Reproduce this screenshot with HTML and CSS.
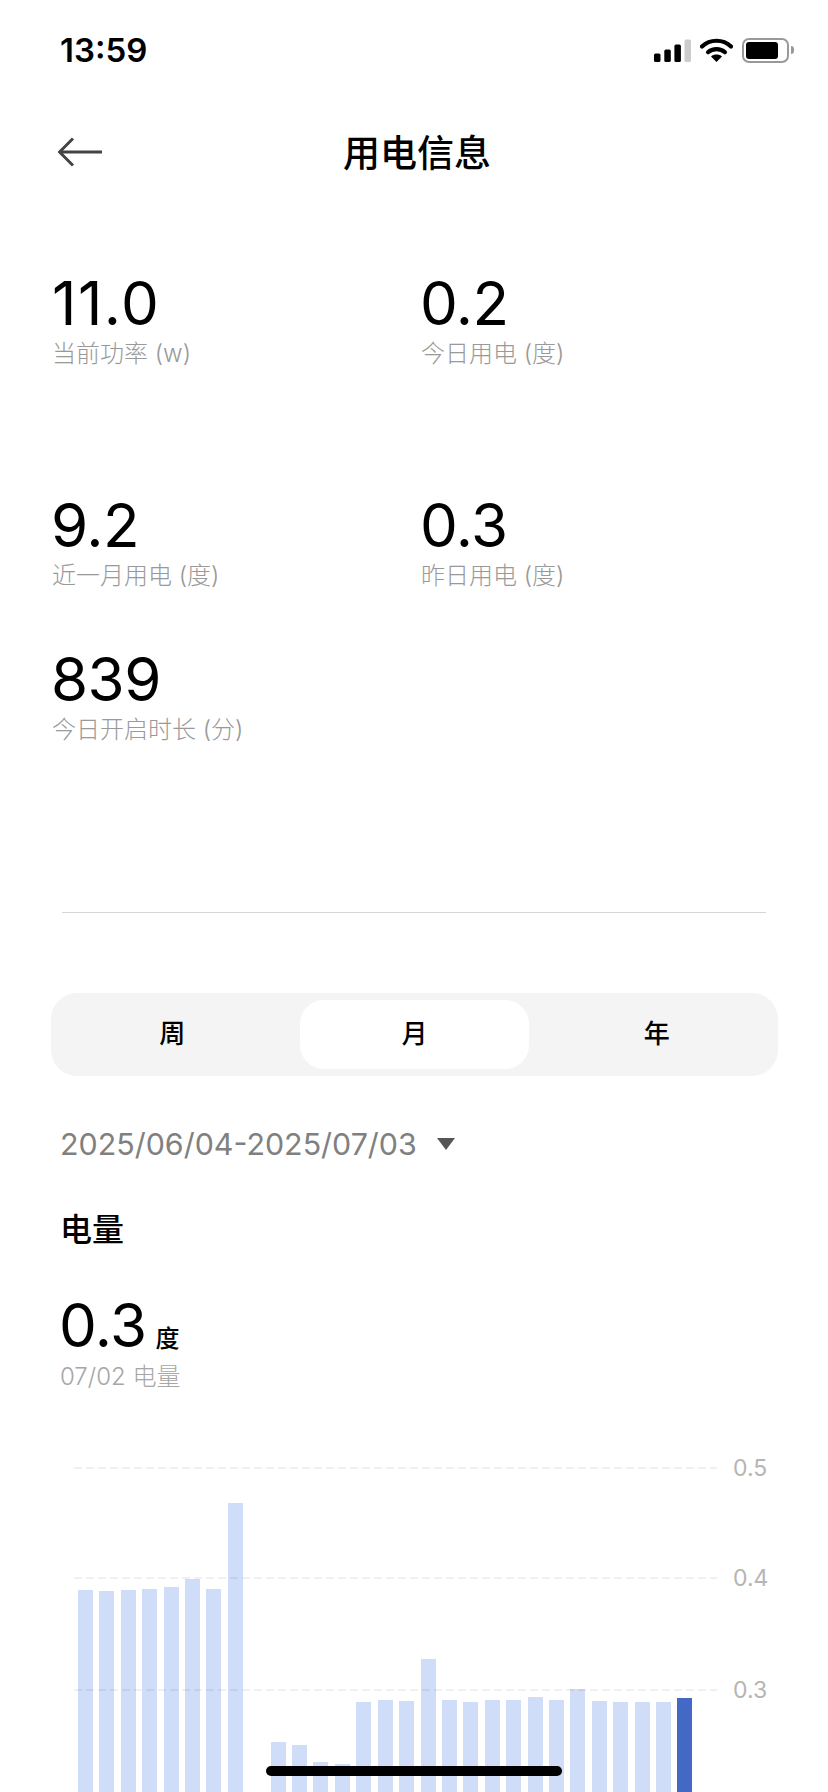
FILE: index.html
```html
<!DOCTYPE html>
<html lang="zh">
<head>
<meta charset="utf-8">
<title>用电信息</title>
<link rel="stylesheet" href="styles.css">
</head>
<body>
<div class="page">
  <header class="status">
    <span class="time">13:59</span>
    <div class="status-icons">
      <svg class="signal" width="37" height="23" viewBox="0 0 37 23">
        <rect x="0" y="14.5" width="6.5" height="8.5" rx="1.6" fill="#000"/>
        <rect x="10.3" y="10.5" width="6.5" height="12.5" rx="1.6" fill="#000"/>
        <rect x="20.4" y="5.5" width="6.5" height="17.5" rx="1.6" fill="#000"/>
        <rect x="30.5" y="0.5" width="6.5" height="22.5" rx="1.6" fill="#ccc"/>
      </svg>
      <svg class="wifi" width="33" height="24" viewBox="0 0 33 24">
        <path d="M2 8.5C10 .8 23 .8 31 8.5" fill="none" stroke="#000" stroke-width="4.2" stroke-linecap="round"/>
        <path d="M8 14.2C12.6 10 20.4 10 25 14.2" fill="none" stroke="#000" stroke-width="4.2" stroke-linecap="round"/>
        <path d="M11 18.4L16.5 24 22 18.4C19 15.8 14 15.8 11 18.4Z" fill="#000"/>
      </svg>
      <div class="battery"><div class="battery-fill"></div></div>
      <div class="battery-nub"></div>
    </div>
  </header>

  <nav class="nav">
    <svg class="back" width="44" height="30" viewBox="0 0 44 30">
      <path d="M15 1.5L1.5 15 15 28.5M1.5 15H44" fill="none" stroke="#444" stroke-width="3"/>
    </svg>
    <h1 class="title">用电信息</h1>
  </nav>

  <section class="stats">
    <div class="stat"><div class="stat-value stat-value-wide">11.0</div><div class="stat-label">当前功率 (w)</div></div>
    <div class="stat"><div class="stat-value">0.2</div><div class="stat-label">今日用电 (度)</div></div>
    <div class="stat"><div class="stat-value">9.2</div><div class="stat-label">近一月用电 (度)</div></div>
    <div class="stat"><div class="stat-value">0.3</div><div class="stat-label">昨日用电 (度)</div></div>
    <div class="stat"><div class="stat-value">839</div><div class="stat-label">今日开启时长 (分)</div></div>
  </section>

  <hr class="divider">

  <div class="segment">
    <div class="seg-item">周</div>
    <div class="seg-item seg-active">月</div>
    <div class="seg-item">年</div>
  </div>

  <div class="date-row">
    <span class="date">2025/06/04-2025/07/03</span>
    <span class="caret"></span>
  </div>

  <h2 class="section-title">电量</h2>

  <div class="reading">
    <span class="reading-value">0.3</span>
    <span class="reading-unit">度</span>
  </div>
  <div class="reading-label">07/02 电量</div>

  <div class="chart">
    <div class="bars">
      <div class="bar" style="height:218px"></div>
      <div class="bar" style="height:217px"></div>
      <div class="bar" style="height:218px"></div>
      <div class="bar" style="height:219px"></div>
      <div class="bar" style="height:221px"></div>
      <div class="bar" style="height:229px"></div>
      <div class="bar" style="height:219px"></div>
      <div class="bar" style="height:305px"></div>
      <div class="bar" style="height:0"></div>
      <div class="bar" style="height:66px"></div>
      <div class="bar" style="height:63px"></div>
      <div class="bar" style="height:46px"></div>
      <div class="bar" style="height:44px"></div>
      <div class="bar" style="height:106px"></div>
      <div class="bar" style="height:108px"></div>
      <div class="bar" style="height:107px"></div>
      <div class="bar" style="height:149px"></div>
      <div class="bar" style="height:108px"></div>
      <div class="bar" style="height:106px"></div>
      <div class="bar" style="height:108px"></div>
      <div class="bar" style="height:108px"></div>
      <div class="bar" style="height:111px"></div>
      <div class="bar" style="height:108px"></div>
      <div class="bar" style="height:119px"></div>
      <div class="bar" style="height:107px"></div>
      <div class="bar" style="height:106px"></div>
      <div class="bar" style="height:106px"></div>
      <div class="bar" style="height:106px"></div>
      <div class="bar bar-active" style="height:110px"></div>
    </div>
    <div class="grid-lines">
      <div class="grid-row grid-row-a"><span class="dash"></span><span class="axis">0.5</span></div>
      <div class="grid-row grid-row-b"><span class="dash"></span><span class="axis">0.4</span></div>
      <div class="grid-row"><span class="dash"></span><span class="axis">0.3</span></div>
    </div>
  </div>

  <div class="home-indicator"></div>
</div>
</body>
</html>
```

FILE: styles.css
```css
* { box-sizing: border-box; }
html, body { margin: 0; padding: 0; background: #fff; }
body { font-family: Inter, "Noto Sans CJK SC", sans-serif; color: #000; }

.page {
  position: relative;
  width: 828px;
  height: 1792px;
  overflow: hidden;
  background: #fff;
}

.status {
  display: flex;
  justify-content: space-between;
  align-items: center;
  height: 100px;
  padding: 0 34px 0 60px;
}
.time { font-size: 33px; font-weight: 600; }
.status-icons { display: flex; align-items: center; }
.signal { margin-right: 9px; }
.wifi { margin-right: 9px; }
.battery {
  width: 47px;
  height: 25px;
  border: 2px solid #999;
  border-radius: 7px;
  padding: 2px;
}
.battery-fill { width: 32px; height: 100%; background: #000; border-radius: 3px; }
.battery-nub {
  width: 3px;
  height: 8px;
  margin-left: 2px;
  background: #999;
  border-radius: 0 3px 3px 0;
}

.nav {
  position: relative;
  display: flex;
  align-items: center;
  justify-content: center;
  height: 104px;
  padding: 2px 0 0 6px;
}
.back { position: absolute; left: 58px; top: 37px; }
.title { margin: 0; font-size: 37px; font-weight: 500; line-height: 1; }

.stats {
  display: grid;
  grid-template-columns: 369px 1fr;
  grid-template-rows: 222px 154px auto;
  padding: 69px 0 0 52px;
}
.stat-value {
  margin-left: -1px;
  font-size: 60px;
  font-weight: 400;
  line-height: 60px;
  letter-spacing: -0.5px;
}
.stat-value-wide { margin-left: 0; letter-spacing: 1.5px; }
.stat-label { font-size: 24px; line-height: 32px; font-weight: 300; color: #999; margin-top: 5px; }

.divider {
  height: 1px;
  margin: 166px 62px 0;
  border: 0;
  background: #d6d6d6;
}

.segment {
  display: grid;
  grid-template-columns: repeat(3, 1fr);
  align-items: center;
  margin: 80px 50px 0 51px;
  height: 83px;
  background: #f4f4f4;
  border-radius: 26px;
}
.seg-item { font-size: 26px; font-weight: 500; text-align: center; line-height: 68px; padding-bottom: 1px; }
.seg-active { margin: 0 7px; background: #fff; border-radius: 24px; }

.date-row { display: flex; align-items: center; margin: 48px 0 0 60px; height: 40px; }
.date { font-size: 30.4px; color: #808080; }
.caret {
  width: 0;
  height: 0;
  margin-left: 20px;
  border-left: 9px solid transparent;
  border-right: 9px solid transparent;
  border-top: 12px solid #555;
}

.section-title { margin: 46px 0 0 60px; font-size: 32px; font-weight: 500; line-height: 40px; }

.reading { display: flex; align-items: baseline; margin: 45px 0 0 59px; height: 60px; }
.reading-value { font-size: 60px; font-weight: 400; line-height: 60px; letter-spacing: -0.5px; }
.reading-unit { font-size: 24px; font-weight: 500; margin-left: 9px; }
.reading-label { margin: 6px 0 0 60px; font-size: 24px; line-height: 32px; font-weight: 300; color: #a6a6a6; }

.chart { position: relative; margin-top: 75px; height: 340px; }
.bars {
  display: grid;
  grid-template-columns: repeat(29, 15px);
  column-gap: 6.42px;
  align-items: end;
  height: 100%;
  padding-left: 78px;
}
.bar { background: #d0ddf8; }
.bar-active { background: #4469c4; }

.grid-lines { position: absolute; inset: -16px 0 auto 0; }
.grid-row { display: flex; align-items: center; height: 32px; padding-left: 74px; }
.grid-row-a { margin-bottom: 78px; }
.grid-row-b { margin-bottom: 80px; }
.dash {
  width: 643px;
  height: 2px;
  background: repeating-linear-gradient(90deg, rgba(0,0,0,.06) 0 8px, transparent 8px 12px);
}
.axis { margin-left: 16px; font-size: 23px; color: #b5b5b5; }

.home-indicator {
  position: absolute;
  left: 266px;
  top: 1766px;
  width: 296px;
  height: 10px;
  background: #000;
  border-radius: 5px;
}
```
